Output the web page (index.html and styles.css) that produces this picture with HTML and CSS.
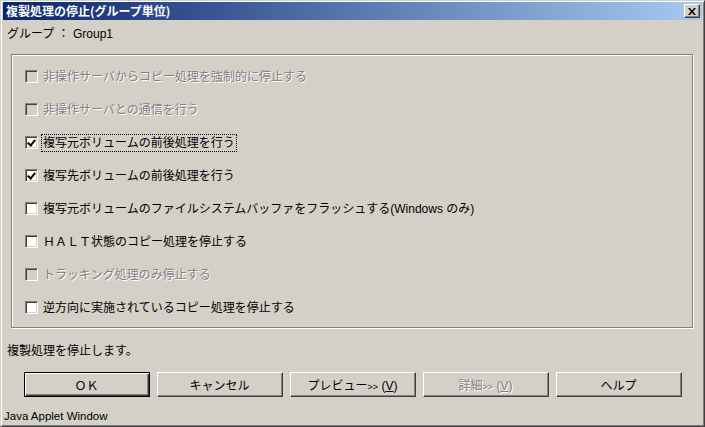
FILE: index.html
```html
<!doctype html>
<html lang="ja">
 <head>
  <meta charset="UTF-8">
  <meta name="viewport" content="width=device-width, initial-scale=1.0">
  <title>複製処理の停止(グループ単位)</title>
  <link rel="stylesheet" href="styles.css">
 </head>
 <body>
  <div class="window">
   <div class="titlebar">
    <span class="title">複製処理の停止(グループ単位)</span>
    <span class="close">
     <svg width="8" height="7" viewBox="0 0 8 7"><path d="M0 0h2l2 2.5 2-2.5h2l-3 3.5 3 3.5h-2l-2-2.5-2 2.5h-2l3-3.5z" fill="#000"/></svg>
    </span>
   </div>
   <div class="content">
    <div class="group-name">グループ ： Group1</div>
    <div class="groupbox">
     <div class="option disabled"><span class="box"></span><span class="text">非操作サーバからコピー処理を強制的に停止する</span></div>
     <div class="option disabled"><span class="box"></span><span class="text">非操作サーバとの通信を行う</span></div>
     <div class="option"><span class="box checked"></span><span class="text focus">複写元ボリュームの前後処理を行う</span></div>
     <div class="option"><span class="box checked"></span><span class="text">複写先ボリュームの前後処理を行う</span></div>
     <div class="option"><span class="box"></span><span class="text">複写元ボリュームのファイルシステムバッファをフラッシュする(Windows のみ)</span></div>
     <div class="option"><span class="box"></span><span class="text">ＨＡＬＴ状態のコピー処理を停止する</span></div>
     <div class="option disabled"><span class="box"></span><span class="text">トラッキング処理のみ停止する</span></div>
     <div class="option"><span class="box"></span><span class="text">逆方向に実施されているコピー処理を停止する</span></div>
    </div>
    <div class="status">複製処理を停止します。</div>
    <div class="buttons">
     <button class="btn default">ＯＫ</button>
     <button class="btn">キャンセル</button>
     <button class="btn">プレビュー<span class="small">&gt;&gt;</span> (<u>V</u>)</button>
     <button class="btn" disabled>詳細<span class="small">&gt;&gt;</span> (<u>V</u>)</button>
     <button class="btn">ヘルプ</button>
    </div>
   </div>
   <div class="applet">Java Applet Window</div>
  </div>
 </body>
</html>
```
FILE: styles.css
```css
body {
    margin: 0;
    background-color: #d4d0c8;
    font-family: "Liberation Sans", "Noto Sans CJK JP", sans-serif;
    font-size: 12px;
    color: #000;
}
.window {
    width: 705px;
    height: 427px;
    box-sizing: border-box;
    border: 1px solid;
    border-color: #d4d0c8 #404040 #404040 #d4d0c8;
    box-shadow: inset 1px 1px #fff, inset -1px -1px #808080;
    padding: 1px 2px 0 2px;
    display: flex;
    flex-direction: column;
}
.titlebar {
    height: 18px;
    display: flex;
    align-items: center;
    justify-content: space-between;
    padding: 0 2px 0 3px;
    background: linear-gradient(to right, #0a246a, #a6caf0);
}
.title {
    color: #fff;
    font-weight: bold;
    font-family: "Noto Sans CJK JP", sans-serif;
    font-size: 12px;
    line-height: 18px;
}
.close {
    width: 16px;
    height: 14px;
    box-sizing: border-box;
    background-color: #d4d0c8;
    border: 1px solid;
    border-color: #fff #404040 #404040 #fff;
    box-shadow: inset -1px -1px #808080;
    display: flex;
    align-items: center;
    justify-content: center;
}
.content {
    padding: 0 9px 0 4px;
}
.group-name {
    padding: 6px 0 0 0;
    line-height: 16px;
    margin-bottom: 12px;
}
.groupbox {
    border: 1px solid #808080;
    box-shadow: inset 1px 1px #fff, 1px 1px #fff;
    padding: 5px 0 3px 13px;
    margin-left: 4px;
}
.option {
    height: 33px;
    display: flex;
    align-items: center;
}
.box {
    width: 13px;
    height: 13px;
    box-sizing: border-box;
    background-color: #fff;
    border: 1px solid;
    border-color: #808080 #fff #fff #808080;
    box-shadow: inset 1px 1px #404040, inset -1px -1px #d4d0c8;
    margin-right: 3px;
    position: relative;
}
.box.checked::after {
    content: "";
    position: absolute;
    left: 2px;
    top: 1px;
    width: 3px;
    height: 6px;
    border: solid #000;
    border-width: 0 2px 2px 0;
    transform: translate(1px, 0) rotate(40deg);
}
.disabled .box {
    background-color: #d4d0c8;
}
.text {
    line-height: 16px;
    border: 1px dotted transparent;
    padding: 0 1px;
}
.text.focus {
    border-color: #000;
}
.disabled .text {
    color: #808080;
    text-shadow: 1px 1px #fff;
}
.status {
    margin-top: 15px;
    line-height: 16px;
}
.buttons {
    margin-top: 13px;
    padding-left: 5px;
    display: flex;
    justify-content: center;
    gap: 7px;
}
.btn {
    width: 126px;
    height: 25px;
    box-sizing: border-box;
    background-color: #d4d0c8;
    font-family: "Liberation Sans", "Noto Sans CJK JP", sans-serif;
    font-size: 12px;
    color: #000;
    border: 1px solid;
    border-color: #fff #404040 #404040 #fff;
    box-shadow: inset -1px -1px #808080;
    padding: 0;
}
.btn.default {
    border-color: #000;
    box-shadow: inset 1px 1px #fff, inset -1px -1px #404040, inset -2px -2px #808080;
}
.btn:disabled {
    color: #808080;
    text-shadow: 1px 1px #fff;
}
.small {
    font-size: 9px;
}
.applet {
    margin-top: auto;
    padding: 0 0 3px 1px;
    line-height: 14px;
    font-size: 11.5px;
}
```
